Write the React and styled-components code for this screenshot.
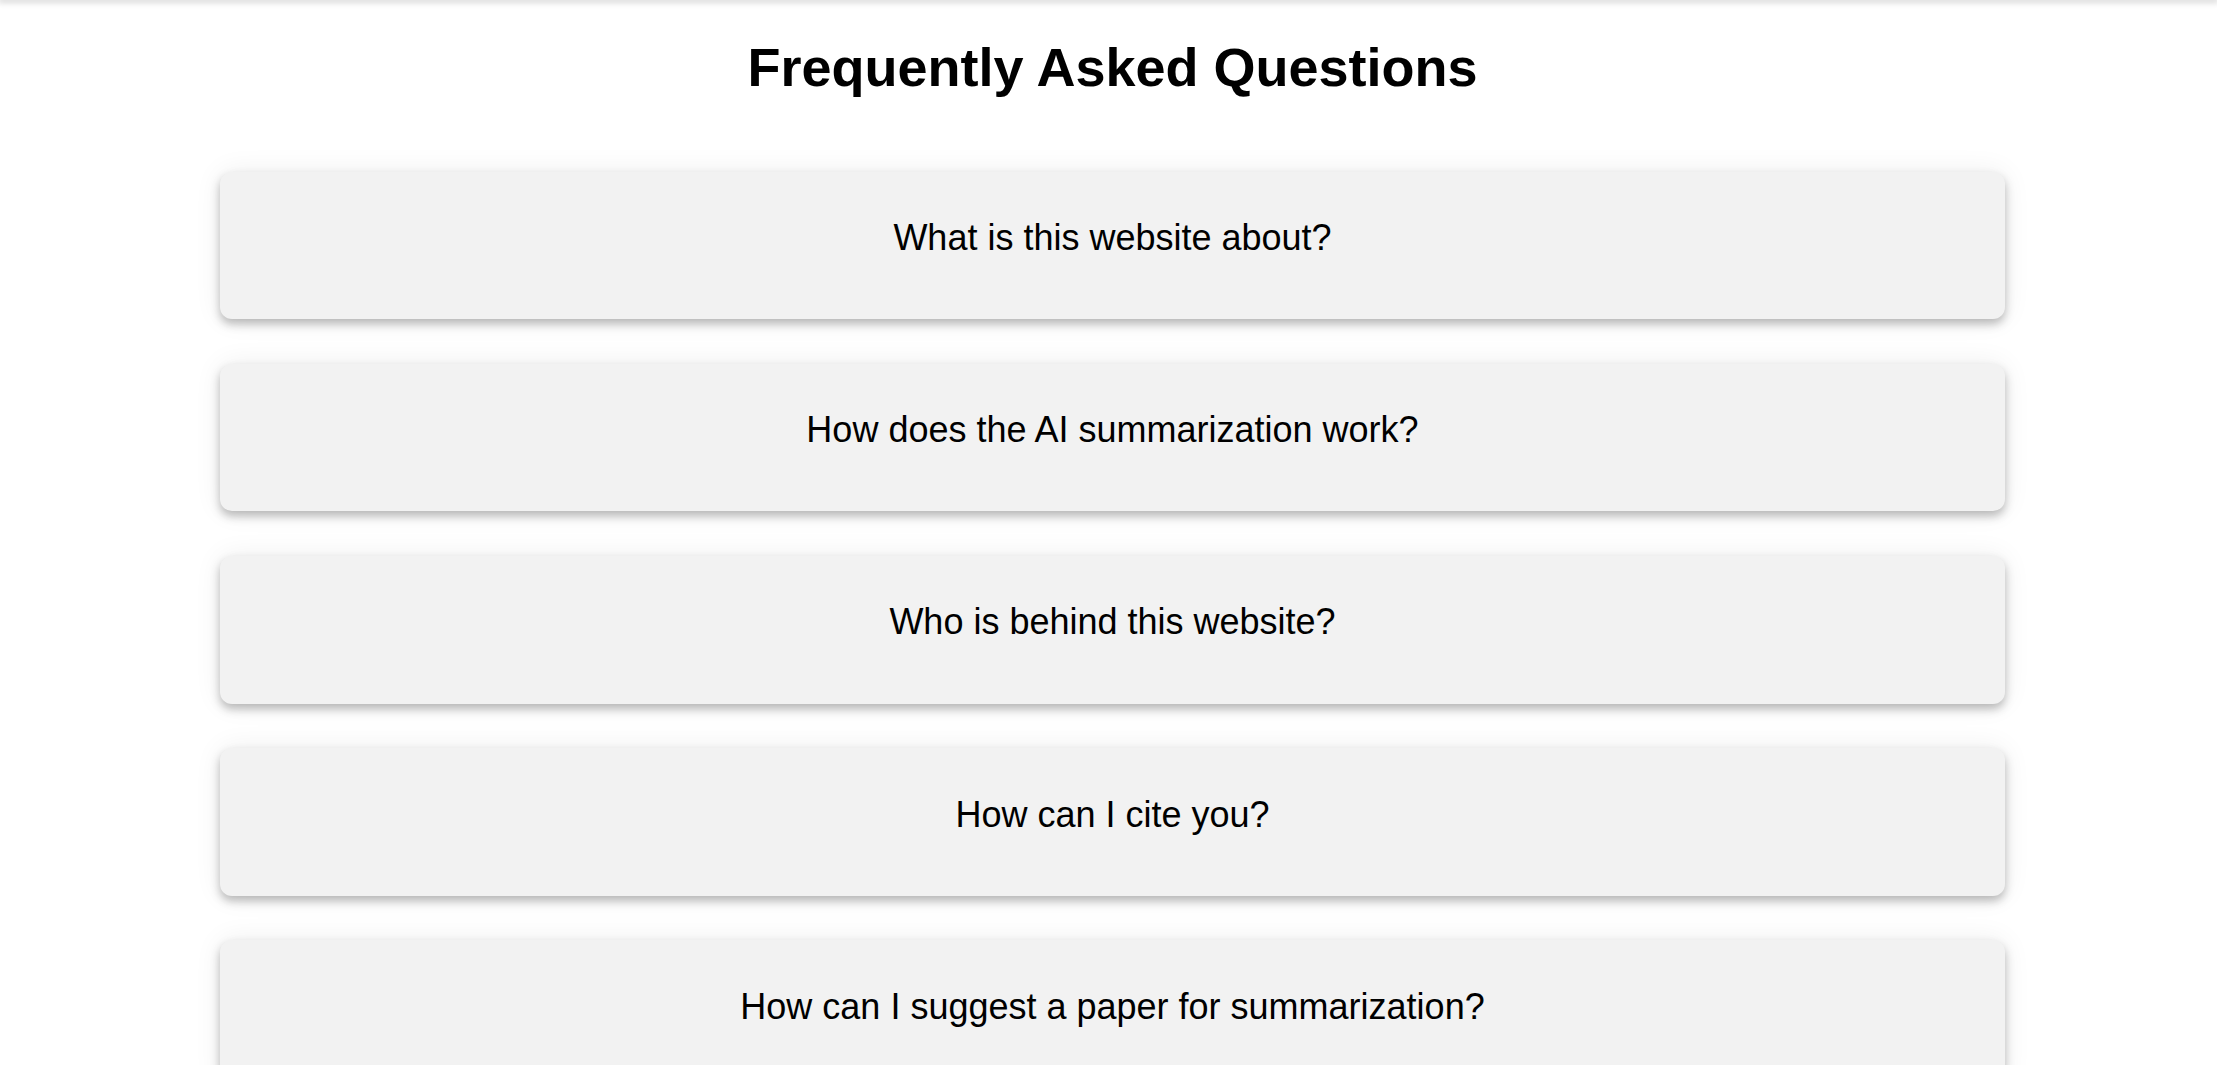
import React from 'react'
import styled, { createGlobalStyle } from 'styled-components'

const questions = [
  'What is this website about?',
  'How does the AI summarization work?',
  'Who is behind this website?',
  'How can I cite you?',
  'How can I suggest a paper for summarization?',
]

const App = () => {
  return (
    <>
      <GlobalStyle />
      <TopShadow />
      <Page>
        <Title>Frequently Asked Questions</Title>
        <List>
          {questions.map(q => (
            <Card key={q}>
              <Question>{q}</Question>
            </Card>
          ))}
        </List>
      </Page>
    </>
  )
}
export default App

const GlobalStyle = createGlobalStyle`
  body {
    margin: 0;
    background: #ffffff;
    font-family: "Liberation Sans", Arial, sans-serif;
    color: #000;
  }
`

const TopShadow = styled.div`
  height: 0;
  box-shadow: 0 0 6px 2px rgba(0, 0, 0, 0.22);
`

const Page = styled.div`
  display: flex;
  flex-direction: column;
  align-items: center;
  padding-left: 8px;
`

const Title = styled.h1`
  margin: 36px 0 73.5px;
  font-size: 54px;
  font-weight: 700;
  text-align: center;
`

const List = styled.div`
  display: flex;
  flex-direction: column;
  gap: 44.5px;
  width: 1785px;
`

const Card = styled.div`
  background: #f2f2f2;
  border-radius: 12px;
  padding: 45.5px 20px 60.2px;
  box-shadow: 0 5px 10px rgba(0, 0, 0, 0.26), 0 0 28px rgba(0, 0, 0, 0.07);
  text-align: center;
`

const Question = styled.p`
  margin: 0;
  font-size: 36px;
  color: #000;
`
